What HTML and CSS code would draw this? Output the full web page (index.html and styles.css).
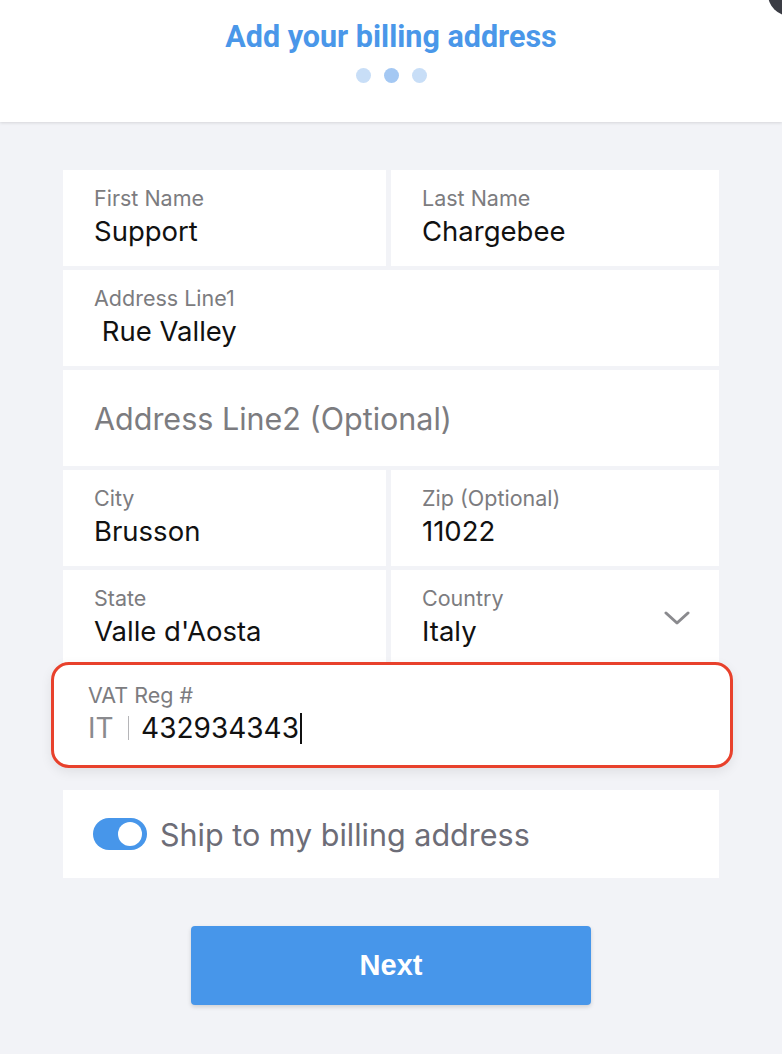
FILE: index.html
```html
<!DOCTYPE html>
<html>
<head>
<meta charset="utf-8">
<link rel="stylesheet" href="styles.css">
</head>
<body>
<div class="close-dot"></div>
<header class="header">
  <h1 class="title">Add your billing address</h1>
  <div class="dots">
    <span class="dot"></span>
    <span class="dot active"></span>
    <span class="dot"></span>
  </div>
</header>
<main class="form">
  <div class="grid">
    <div class="cell"><div class="label">First Name</div><div class="value">Support</div></div>
    <div class="cell"><div class="label">Last Name</div><div class="value">Chargebee</div></div>
    <div class="cell wide"><div class="label">Address Line1</div><div class="value">&nbsp;Rue Valley</div></div>
    <div class="cell wide placeholder-cell"><div class="placeholder">Address Line2 (Optional)</div></div>
    <div class="cell"><div class="label">City</div><div class="value">Brusson</div></div>
    <div class="cell"><div class="label">Zip (Optional)</div><div class="value">11022</div></div>
    <div class="cell"><div class="label">State</div><div class="value">Valle d'Aosta</div></div>
    <div class="cell select"><div class="label">Country</div><div class="value">Italy</div>
      <svg class="chevron" width="26" height="16" viewBox="0 0 26 16"><path d="M2 3 L13 13 L24 3" fill="none" stroke="#8a8a8e" stroke-width="3" stroke-linecap="round" stroke-linejoin="round"/></svg>
    </div>
    <div class="vat">
      <div class="label">VAT Reg #</div>
      <div class="vat-value"><span class="prefix">IT</span><span class="sep"></span><span class="num">432934343</span><span class="caret"></span></div>
    </div>
  </div>
  <div class="ship">
    <span class="toggle"><span class="knob"></span></span>
    <span class="ship-text">Ship to my billing address</span>
  </div>
  <div class="actions">
    <button class="next">Next</button>
  </div>
</main>
</body>
</html>
```
FILE: styles.css
```css
* { box-sizing: border-box; }
html, body { margin: 0; padding: 0; }
body {
  background: #f2f3f7;
  font-family: Inter, "Noto Sans", sans-serif;
  width: 782px;
  height: 1054px;
  overflow: hidden;
  position: relative;
}
.close-dot {
  position: absolute;
  right: -30px;
  top: -28px;
  width: 44px;
  height: 44px;
  border-radius: 50%;
  background: #3a3c44;
  z-index: 2;
}
.header {
  background: #fff;
  height: 122px;
  box-shadow: 0 1px 3px rgba(0,0,0,0.12);
  display: flex;
  flex-direction: column;
  align-items: center;
  padding-top: 20px;
}
.title {
  margin: 0;
  font-family: Roboto, sans-serif;
  font-weight: 700;
  font-size: 30.5px;
  line-height: 34px;
  color: #4a97e9;
}
.dots {
  display: flex;
  gap: 13px;
  margin-top: 14px;
}
.dot {
  width: 15px;
  height: 15px;
  border-radius: 50%;
  background: #c8def7;
}
.dot.active { background: #a4c8f3; }
.form {
  width: 656px;
  margin: 48px auto 0;
}
.grid {
  display: grid;
  grid-template-columns: 323px 1fr;
  column-gap: 5px;
  row-gap: 4px;
}
.cell {
  background: #fff;
  height: 96px;
  padding: 16px 31px 0;
  position: relative;
}
.cell.wide { grid-column: 1 / 3; }
.label {
  font-size: 21.5px;
  line-height: 24px;
  color: #7c7c80;
}
.value {
  margin-top: 4px;
  font-size: 27.5px;
  line-height: 34px;
  color: #111;
}
.placeholder-cell {
  display: flex;
  align-items: center;
  padding-top: 0;
}
.placeholder {
  font-size: 30.5px;
  color: #7c7c80;
}
.chevron {
  position: absolute;
  right: 29px;
  top: 40px;
}
.vat {
  grid-column: 1 / 3;
  margin: -8px -14px 0 -12px;
  height: 106px;
  background: #fff;
  border: 3px solid #e8412c;
  border-radius: 18px;
  box-shadow: 0 4px 12px rgba(0,0,0,0.08);
  padding: 18px 34px 0;
  position: relative;
  z-index: 1;
}
.vat-value {
  display: flex;
  align-items: center;
  margin-top: 4px;
  font-size: 28px;
  line-height: 34px;
}
.prefix { color: #8a8a8e; }
.sep {
  width: 1.5px;
  height: 24px;
  background: #b5b5b8;
  margin: 0 12px 0 14px;
}
.num { color: #111; }
.caret {
  width: 2px;
  height: 31px;
  background: #111;
  margin-left: 1px;
}
.ship {
  margin-top: 22px;
  height: 88px;
  background: #fff;
  display: flex;
  align-items: center;
  padding-left: 30px;
}
.toggle {
  width: 54px;
  height: 32px;
  border-radius: 16px;
  background: #4796ea;
  display: flex;
  align-items: center;
  justify-content: flex-end;
  padding-right: 5px;
}
.knob {
  width: 24px;
  height: 24px;
  border-radius: 50%;
  background: #fff;
}
.ship-text {
  margin-left: 13px;
  font-size: 30.5px;
  color: #6d6d77;
}
.actions {
  display: flex;
  justify-content: center;
  margin-top: 48px;
}
.next {
  width: 400px;
  height: 79px;
  border: none;
  border-radius: 4px;
  background: #4796ea;
  color: #fff;
  font-family: "Liberation Sans", Arial, sans-serif;
  font-weight: 700;
  font-size: 29px;
  box-shadow: 0 2px 4px rgba(0,0,0,0.15);
}
```
